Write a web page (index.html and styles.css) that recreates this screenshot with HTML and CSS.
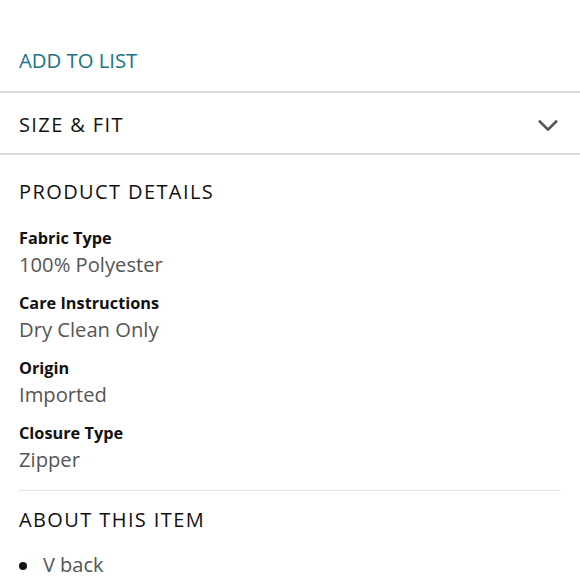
FILE: index.html
```html
<!DOCTYPE html>
<html>
<head>
<meta charset="utf-8">
<link rel="stylesheet" href="styles.css">
</head>
<body>
<div class="add"><a class="add-link">ADD TO LIST</a></div>
<div class="size">
  <span class="heading">SIZE &amp; FIT</span>
  <svg class="chev" width="20" height="14" viewBox="0 0 20 14"><path d="M1.8 2.5 L10 10.7 L18.2 2.5" fill="none" stroke="#555" stroke-width="2.6" stroke-linecap="round" stroke-linejoin="round"/></svg>
</div>
<div class="details">
  <div class="heading">PRODUCT DETAILS</div>
  <dl class="attrs">
    <div class="attr"><dt>Fabric Type</dt><dd>100% Polyester</dd></div>
    <div class="attr"><dt>Care Instructions</dt><dd>Dry Clean Only</dd></div>
    <div class="attr"><dt>Origin</dt><dd>Imported</dd></div>
    <div class="attr"><dt>Closure Type</dt><dd>Zipper</dd></div>
  </dl>
  <div class="divider"></div>
  <div class="heading">ABOUT THIS ITEM</div>
  <ul class="bullets">
    <li><span class="dot"></span><span>V back</span></li>
  </ul>
</div>
</body>
</html>
```
FILE: styles.css
```css
html, body { margin: 0; padding: 0; background: #fff; }
body { font-family: "Open Sans", "Noto Sans", sans-serif; color: #111; width: 580px; overflow: hidden; }
.add { height: 93px; box-sizing: border-box; padding: 48px 19px 0; border-bottom: 2px solid #dcdcdc; }
.add-link { color: #1a7385; font-size: 20.3px; line-height: 24px; display: block; }
.size { height: 62px; box-sizing: border-box; display: flex; align-items: center; justify-content: space-between; padding: 6px 22px 0 19px; border-bottom: 2px solid #dcdcdc; }
.heading { font-size: 20px; letter-spacing: 1.4px; line-height: 26px; color: #111; }
.size .heading { margin-top: -2px; }
.chev { display: block; }
.details { padding: 24px 19px 0; }
.attrs { margin: 22px 0 0; padding: 0; }
.attr { margin-bottom: 15px; }
.attr:last-child { margin-bottom: 0; }
dt { font-weight: 700; font-size: 16.3px; line-height: 22px; color: #111; }
dd { margin: 2px 0 0; font-size: 20.2px; line-height: 26px; color: #555; }
.divider { height: 1px; background: #e3e3e3; margin: 18px 0 16px; }
.bullets { list-style: none; margin: 19px 0 0; padding: 0; font-size: 20px; line-height: 26px; color: #555; }
.bullets li { display: flex; align-items: center; }
.dot { width: 8px; height: 8px; border-radius: 50%; background: #111; margin: 0 16px 0 0; flex: none; position: relative; top: 1px; }
```
